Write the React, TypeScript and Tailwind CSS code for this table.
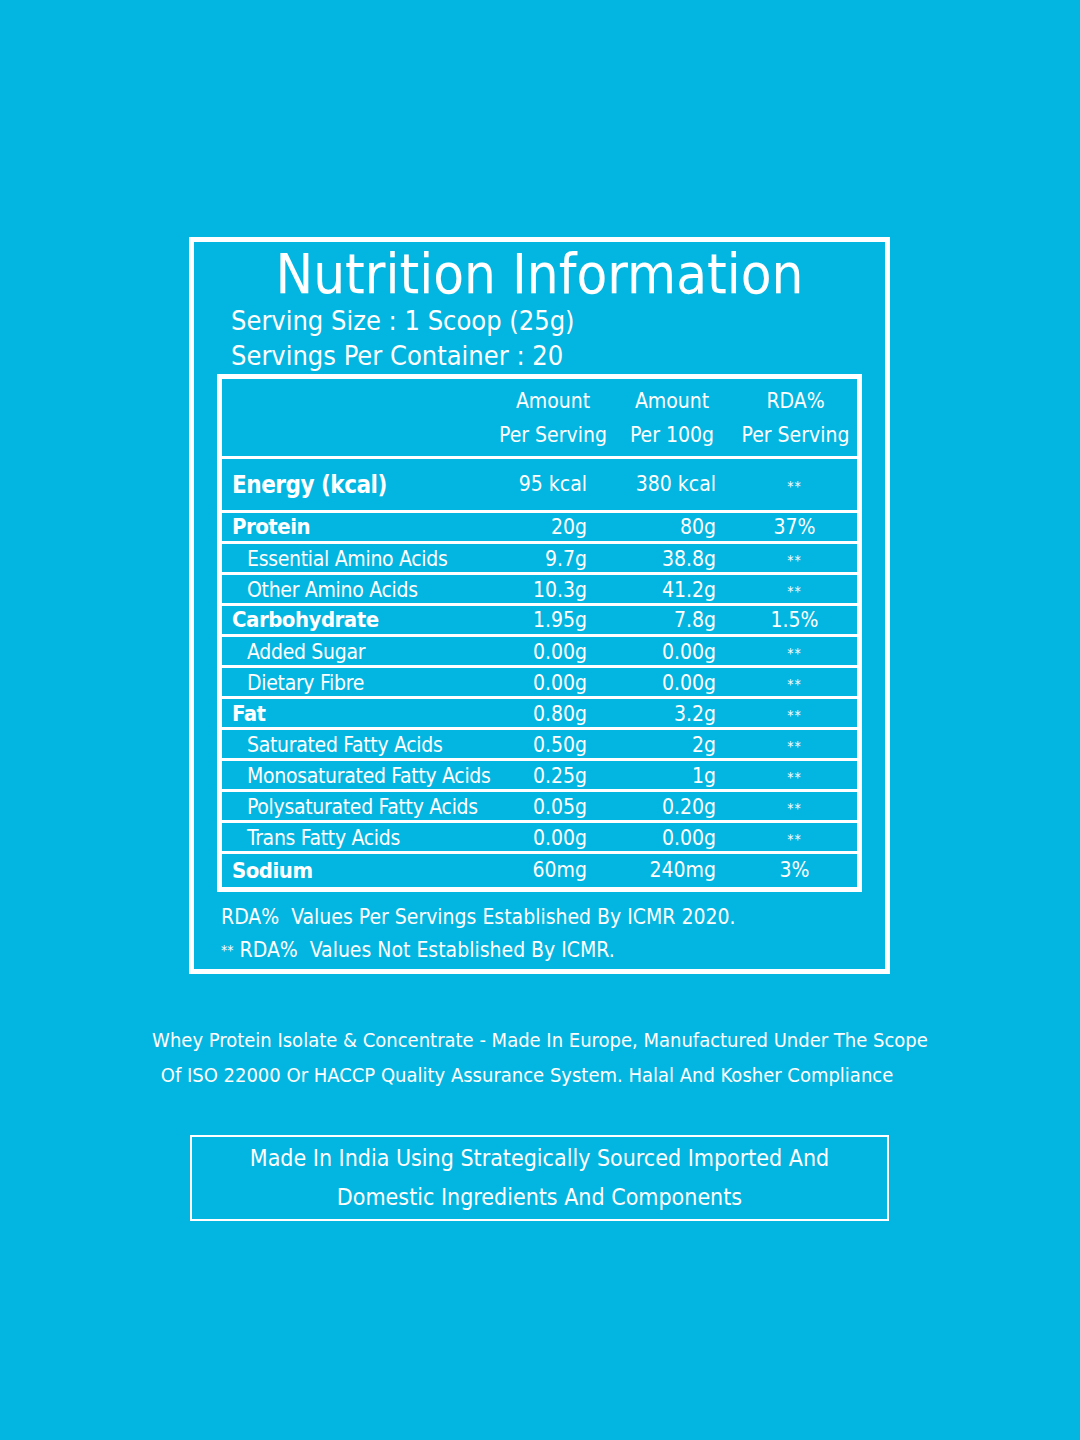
const font = { fontFamily: '"Liberation Sans Narrow", "DejaVu Sans Condensed", "Liberation Sans", sans-serif' };

type Row = { label: string; serving: string; per100: string; rda: string; main?: boolean };

const rows: Row[] = [
  { label: "Protein", serving: "20g", per100: "80g", rda: "37%", main: true },
  { label: "Essential Amino Acids", serving: "9.7g", per100: "38.8g", rda: "**" },
  { label: "Other Amino Acids", serving: "10.3g", per100: "41.2g", rda: "**" },
  { label: "Carbohydrate", serving: "1.95g", per100: "7.8g", rda: "1.5%", main: true },
  { label: "Added Sugar", serving: "0.00g", per100: "0.00g", rda: "**" },
  { label: "Dietary Fibre", serving: "0.00g", per100: "0.00g", rda: "**" },
  { label: "Fat", serving: "0.80g", per100: "3.2g", rda: "**", main: true },
  { label: "Saturated Fatty Acids", serving: "0.50g", per100: "2g", rda: "**" },
  { label: "Monosaturated Fatty Acids", serving: "0.25g", per100: "1g", rda: "**" },
  { label: "Polysaturated Fatty Acids", serving: "0.05g", per100: "0.20g", rda: "**" },
  { label: "Trans Fatty Acids", serving: "0.00g", per100: "0.00g", rda: "**" },
];

function Rda({ value }: { value: string }) {
  if (value === "**") {
    return <span className="text-[14px] tracking-[1px]">**</span>;
  }
  return <span className="text-[21px]">{value}</span>;
}

export default function App() {
  return (
    <div className="min-h-[1440px] w-full bg-[#03b6e1] pt-[237px] text-white" style={font}>
      <div className="mx-[189px] w-[701px] border-[5px] border-white">
        <h1 className="mt-[2px] text-center text-[56px] leading-[59px]">Nutrition Information</h1>
        <div className="pl-[37px] text-[27px] leading-[35px]">
          <p>Serving Size : 1 Scoop (25g)</p>
          <p>Servings Per Container : 20</p>
        </div>

        <div className="mx-[23px] mt-[1px] border-[5px] border-white">
          <div className="grid h-[77px] grid-cols-[274px_114px_124px_1fr] content-center text-center text-[21px] leading-[34px]">
            <div />
            <div>Amount<br />Per Serving</div>
            <div>Amount<br />Per 100g</div>
            <div>RDA%<br />Per Serving</div>
          </div>
          <div className="grid h-[54px] grid-cols-[278px_87px_129px_1fr] items-center border-t-[3px] border-white text-[21px]">
            <div className="pl-[10px] text-[24px] font-bold tracking-[-0.5px]">Energy (kcal)</div>
            <div className="text-right">95 kcal</div>
            <div className="text-right">380 kcal</div>
            <div className="pl-[16px] text-center"><Rda value="**" /></div>
          </div>
          {rows.map((r) => (
            <div
              key={r.label}
              className="grid h-[31px] grid-cols-[278px_87px_129px_1fr] items-center border-t-[3px] border-white text-[21px] leading-[28px]"
            >
              <div
                className={
                  r.main
                    ? "whitespace-nowrap pl-[10px] text-[22px] font-bold tracking-[-0.5px]"
                    : "whitespace-nowrap pl-[25px] text-[21px] tracking-[-0.3px]"
                }
              >
                {r.label}
              </div>
              <div className="text-right">{r.serving}</div>
              <div className="text-right">{r.per100}</div>
              <div className="pl-[16px] text-center"><Rda value={r.rda} /></div>
            </div>
          ))}
          <div className="grid h-[36px] grid-cols-[278px_87px_129px_1fr] items-center border-t-[3px] border-white text-[21px]">
            <div className="pl-[10px] text-[22px] font-bold tracking-[-0.5px]">Sodium</div>
            <div className="text-right">60mg</div>
            <div className="text-right">240mg</div>
            <div className="pl-[16px] text-center"><Rda value="3%" /></div>
          </div>
        </div>

        <div className="mt-[9px] pb-[2px] pl-[27px] text-[21px] leading-[33px]">
          <p>RDA%&nbsp; Values Per Servings Established By ICMR 2020.</p>
          <p><span className="align-top text-[14px]">**</span> RDA%&nbsp; Values Not Established By ICMR.</p>
        </div>
      </div>

      <div className="mt-[49px] text-center text-[20px] leading-[35px]">
        <p>Whey Protein Isolate &amp; Concentrate - Made In Europe, Manufactured Under The Scope</p>
        <p className="pr-[26px]">Of ISO 22000 Or HACCP Quality Assurance System. Halal And Kosher Compliance</p>
      </div>

      <div className="mx-[190px] mt-[42px] w-[699px] border-[2px] border-white py-[2px] text-center text-[23px] leading-[39px]">
        <p>Made In India Using Strategically Sourced Imported And</p>
        <p>Domestic Ingredients And Components</p>
      </div>
    </div>
  );
}
